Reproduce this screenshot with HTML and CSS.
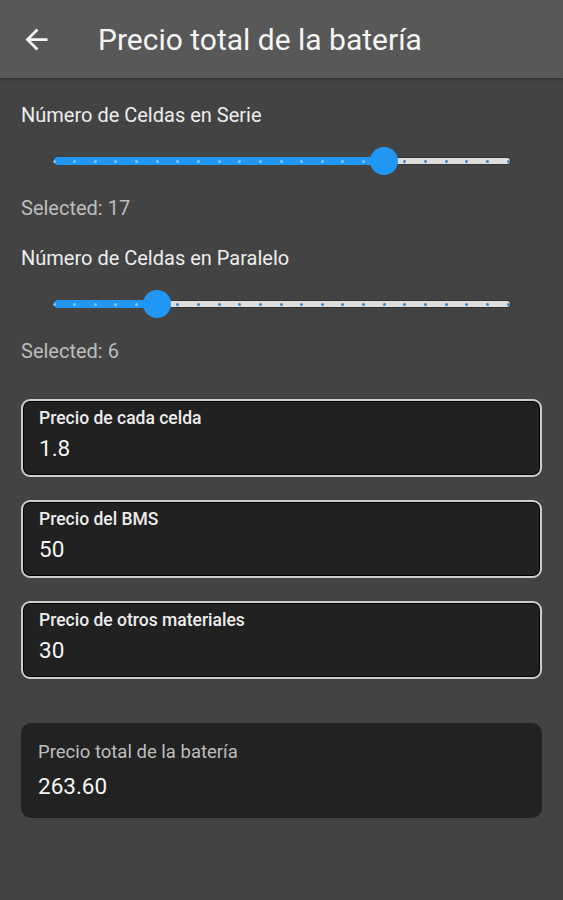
FILE: index.html
```html
<!DOCTYPE html>
<html>
<head>
    <title>Precio total de la batería</title>
    <link rel="stylesheet" href="styles.css">
</head>
<body>
    <header class="app-bar">
        <svg class="back-icon" viewBox="0 0 24 24" width="33" height="33">
            <path d="M20 11H7.83l5.59-5.59L12 4l-8 8 8 8 1.41-1.41L7.83 13H20v-2z" fill="#f5f5f5"/>
        </svg>
        <h1 class="app-title">Precio total de la batería</h1>
    </header>

    <main class="content">
        <section class="slider-group">
            <div class="slider-label">Número de Celdas en Serie</div>
            <div class="slider" data-value="17" data-min="1" data-max="23">
                <div class="track"></div>
                <div class="track-active"></div>
                <div class="ticks"></div>
                <div class="thumb"></div>
            </div>
            <div class="selected">Selected: 17</div>
        </section>

        <section class="slider-group">
            <div class="slider-label">Número de Celdas en Paralelo</div>
            <div class="slider" data-value="6" data-min="1" data-max="23">
                <div class="track"></div>
                <div class="track-active"></div>
                <div class="ticks"></div>
                <div class="thumb"></div>
            </div>
            <div class="selected">Selected: 6</div>
        </section>

        <div class="fields">
            <label class="field">
                <span class="field-label">Precio de cada celda</span>
                <input class="field-input" type="text" value="1.8">
            </label>
            <label class="field">
                <span class="field-label">Precio del BMS</span>
                <input class="field-input" type="text" value="50">
            </label>
            <label class="field">
                <span class="field-label">Precio de otros materiales</span>
                <input class="field-input" type="text" value="30">
            </label>
        </div>

        <div class="total-card">
            <div class="total-label">Precio total de la batería</div>
            <div class="total-value">263.60</div>
        </div>
    </main>

    <script>
        // Build the tick marks and place the thumb for each slider
        document.querySelectorAll('.slider').forEach(function(slider) {
            const value = Number(slider.dataset.value);
            const min = Number(slider.dataset.min);
            const max = Number(slider.dataset.max);
            const steps = max - min;
            const percent = (value - min) / steps * 100;

            slider.querySelector('.track-active').style.width = percent + '%';
            slider.querySelector('.thumb').style.left = percent + '%';

            const ticks = slider.querySelector('.ticks');
            for (let i = 0; i <= steps; i++) {
                const tick = document.createElement('span');
                tick.className = i < value - min ? 'tick on' : 'tick off';
                tick.style.left = (i / steps * 100) + '%';
                ticks.appendChild(tick);
            }
        });
    </script>
</body>
</html>
```

FILE: styles.css
```css
* {
    box-sizing: border-box;
}

body {
    margin: 0;
    font-family: Roboto, "Noto Sans", sans-serif;
    background-color: #434343;
    color: #f2f2f2;
    min-height: 900px;
}

.app-bar {
    height: 78px;
    display: flex;
    align-items: center;
    background-color: #585858;
    box-shadow: 0 1px 3px rgba(0,0,0,0.35);
    padding-left: 20px;
}

.back-icon {
    display: block;
    flex-shrink: 0;
}

.app-title {
    margin: 0 0 0 45px;
    font-size: 30px;
    font-weight: 400;
    color: #f5f5f5;
}

.content {
    padding: 25px 21px 0 21px;
}

.slider-group {
    margin-bottom: 26px;
}

.slider-label {
    font-size: 20px;
    line-height: 24px;
    font-weight: 400;
    color: #ededed;
}

.slider {
    position: relative;
    height: 40px;
    margin: 14px 34px 15px 33px;
}

.track {
    position: absolute;
    left: 0;
    right: -2px;
    top: 17px;
    height: 6px;
    border-radius: 3px;
    background-color: #dedede;
    box-shadow: 0 0 0 1px rgba(0,0,0,0.25);
}

.track-active {
    position: absolute;
    left: 0;
    top: 16px;
    height: 8px;
    border-radius: 4px;
    background-color: #2196f3;
}

.ticks {
    position: absolute;
    left: 0;
    right: 0;
    top: 20px;
}

.tick {
    position: absolute;
    width: 3px;
    height: 3px;
    margin: -1.5px 0 0 -1.5px;
    border-radius: 50%;
}

.tick.on {
    background-color: rgba(200, 230, 255, 0.6);
}

.tick.off {
    background-color: #2f86d6;
}

.thumb {
    position: absolute;
    top: 6px;
    width: 28px;
    height: 28px;
    margin-left: -14px;
    border-radius: 50%;
    background-color: #2196f3;
}

.selected {
    font-size: 20px;
    line-height: 24px;
    color: #bdbdbd;
}

.fields {
    margin-top: 36px;
    display: flex;
    flex-direction: column;
    gap: 23px;
}

.field {
    display: flex;
    flex-direction: column;
    height: 78px;
    padding: 7px 16px 0 16px;
    border: 2px solid #cdcdcd;
    border-radius: 9px;
    background-color: #212121;
    box-shadow: inset 0 0 0 1px #000;
}

.field-label {
    font-size: 17.5px;
    line-height: 20px;
    font-weight: 500;
    color: #ededed;
}

.field-input {
    margin-top: 6px;
    padding: 0;
    border: none;
    outline: none;
    background: transparent;
    font-family: inherit;
    font-size: 22.5px;
    line-height: 28px;
    height: 28px;
    color: #f5f5f5;
}

.total-card {
    margin-top: 44px;
    height: 95px;
    padding: 18px 17px 0 17px;
    border-radius: 10px;
    background-color: #222222;
}

.total-label {
    font-size: 18.5px;
    line-height: 22px;
    color: #bdbdbd;
}

.total-value {
    margin-top: 10px;
    font-size: 22.5px;
    line-height: 26px;
    font-weight: 400;
    color: #f5f5f5;
}
```
